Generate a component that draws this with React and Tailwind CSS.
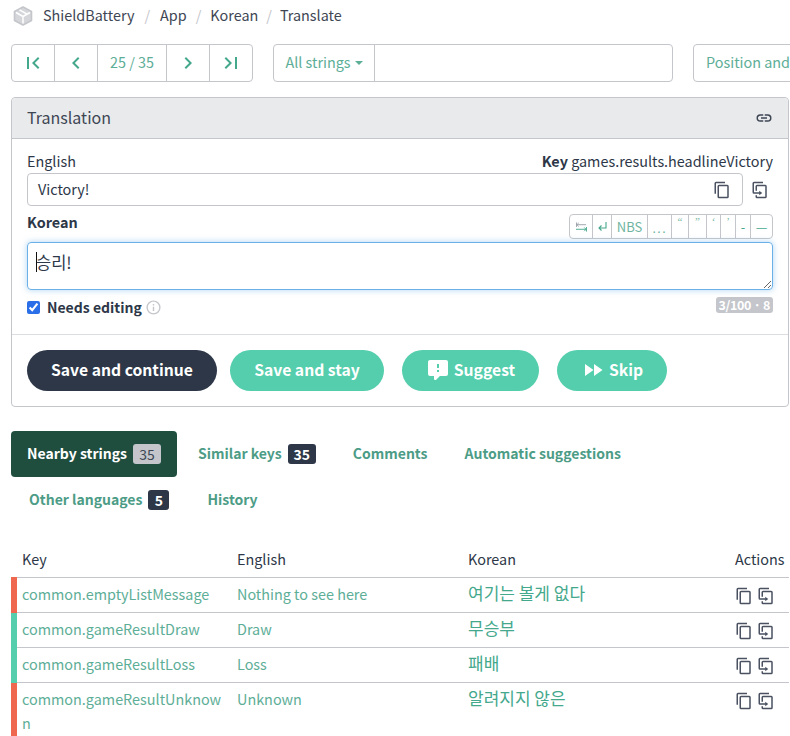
const FONT = "font-['Noto_Sans_CJK_KR','Noto_Sans',sans-serif]";

const ICONS = {
  first: "M18.41,16.59L13.82,12L18.41,7.41L17,6L11,12L17,18L18.41,16.59M6,6H8V18H6V6Z",
  prev: "M15.41,16.58L10.83,12L15.41,7.41L14,6L8,12L14,18L15.41,16.58Z",
  next: "M8.59,16.58L13.17,12L8.59,7.41L10,6L16,12L10,18L8.59,16.58Z",
  last: "M5.59,7.41L10.18,12L5.59,16.59L7,18L13,12L7,6L5.59,7.41M16,6H18V18H16V6Z",
  link: "M3.9,12C3.9,10.29 5.29,8.9 7,8.9H11V7H7A5,5 0 0,0 2,12A5,5 0 0,0 7,17H11V15.1H7C5.29,15.1 3.9,13.71 3.9,12M8,13H16V11H8V13M17,7H13V8.9H17C18.71,8.9 20.1,10.29 20.1,12C20.1,13.71 18.71,15.1 17,15.1H13V17H17A5,5 0 0,0 22,12A5,5 0 0,0 17,7Z",
  copy: "M19,21H8V7H19M19,5H8A2,2 0 0,0 6,7V21A2,2 0 0,0 8,23H19A2,2 0 0,0 21,21V7A2,2 0 0,0 19,5M16,1H4A2,2 0 0,0 2,3V17H4V3H16V1Z",
  duplicate: "M11,17H4A2,2 0 0,1 2,15V3A2,2 0 0,1 4,1H16V3H4V15H11V13L15,16L11,19V17M19,21V7H8V13H6V7A2,2 0 0,1 8,5H19A2,2 0 0,1 21,7V21A2,2 0 0,1 19,23H8A2,2 0 0,1 6,21V19H8V21H19Z",
  suggest: "M9,22A1,1 0 0,1 8,21V18H4A2,2 0 0,1 2,16V4C2,2.89 2.9,2 4,2H20A2,2 0 0,1 22,4V16A2,2 0 0,1 20,18H13.9L10.2,21.71C10,21.9 9.75,22 9.5,22V22H9M13,10V6H11V10H13M13,14V12H11V14H13Z",
  skip: "M13,6V18L21.5,12M4,18L12.5,12L4,6V18Z",
  info: "M11,9H13V7H11M12,20C7.59,20 4,16.41 4,12C4,7.59 7.59,4 12,4C16.41,4 20,7.59 20,12C20,16.41 16.41,20 12,20M12,2A10,10 0 0,0 2,12A10,10 0 0,0 12,22A10,10 0 0,0 22,12A10,10 0 0,0 12,2M11,17H13V11H11V17Z",
};

function Icon({ name, className }) {
  return (
    <svg viewBox="0 0 24 24" fill="currentColor" className={className}>
      <path d={ICONS[name]} />
    </svg>
  );
}

const ROWS = [
  { key: "common.emptyListMessage", en: "Nothing to see here", ko: "여기는 볼게 없다", bar: "border-l-[#f0674f]" },
  { key: "common.gameResultDraw", en: "Draw", ko: "무승부", bar: "border-l-[#54ceac]" },
  { key: "common.gameResultLoss", en: "Loss", ko: "패배", bar: "border-l-[#54ceac]" },
  { key: "common.gameResultUnknown", en: "Unknown", ko: "알려지지 않은", bar: "border-l-[#f0674f]" },
];

const CHARS = [
  { c: "NBS", w: "w-[36px] text-[13px]" },
  { c: "...", w: "w-[24px] text-[14px] tracking-[1px] font-['Liberation_Sans'] pt-[3px]" },
  { c: "“", w: "w-[17px] text-[11px] pb-[10px] font-['Liberation_Serif']" },
  { c: "”", w: "w-[18px] text-[11px] pb-[10px] font-['Liberation_Serif']" },
  { c: "‘", w: "w-[14px] text-[11px] pb-[10px] font-['Liberation_Serif']" },
  { c: "’", w: "w-[15px] text-[11px] pb-[10px] font-['Liberation_Serif']" },
  { c: "-", w: "w-[15px] text-[13px] text-[#44a88c]" },
];

export default function App() {
  return (
    <div className={`${FONT} relative h-[736px] w-[790px] overflow-hidden bg-white text-[14.4px] text-[#2d3748]`}>
      {/* Breadcrumb */}
      <div className="flex h-[32px] items-center pl-[13px] leading-[20px] text-[#3e4654]">
        <svg viewBox="0 0 20 20" className="mr-[10px] h-[20px] w-[20px]" fill="#d5d6da" stroke="#c4c6cb" strokeWidth="1.6" strokeLinejoin="round">
          <path d="M10 1 18.5 5.5v9L10 19 1.5 14.5v-9Z" />
          <path d="M3 6.5 10 10.5V17.5M10 10.5 17 6.5M6.5 3.8l7.5 4.4" fill="none" stroke="#fff" strokeWidth="1.5" />
        </svg>
        <span className="mb-[2px]">ShieldBattery</span>
        <span className="mx-[10px] mb-[2px] text-[#c4c6cb]">/</span>
        <span className="mb-[2px]">App</span>
        <span className="mx-[9px] mb-[2px] text-[#c4c6cb]">/</span>
        <span className="mb-[2px]">Korean</span>
        <span className="mx-[8px] mb-[2px] text-[#c4c6cb]">/</span>
        <span className="mb-[2px]">Translate</span>
      </div>

      {/* Toolbar */}
      <div className="mt-[12px] flex items-start pl-[11px]">
        <div className="flex h-[38px] w-[242px] shrink-0 items-stretch rounded-[4px] border border-[#c4c6cb] text-[#44a88c]">
          <div className="flex w-[43px] items-center justify-center border-r border-[#c4c6cb]"><Icon name="first" className="h-[24px] w-[24px]" /></div>
          <div className="flex w-[43px] items-center justify-center border-r border-[#c4c6cb]"><Icon name="prev" className="h-[24px] w-[24px]" /></div>
          <div className="flex w-[69px] items-center justify-center border-r border-[#c4c6cb] pb-[2px] text-[#5dae97]">25 / 35</div>
          <div className="flex w-[43px] items-center justify-center border-r border-[#c4c6cb]"><Icon name="next" className="h-[24px] w-[24px]" /></div>
          <div className="flex flex-1 items-center justify-center"><Icon name="last" className="h-[24px] w-[24px]" /></div>
        </div>
        <div className="ml-[20px] flex h-[38px] w-[400px] shrink-0 items-stretch rounded-[4px] border border-[#c4c6cb]">
          <div className="flex w-[101px] items-center justify-center gap-[4px] border-r border-[#c4c6cb] pb-[2px] text-[#5dae97]">
            All strings
            <span className="mt-[2px] h-0 w-0 border-x-[4px] border-t-[4px] border-x-transparent border-t-[#5dae97]" />
          </div>
        </div>
        <div className="ml-[20px] flex h-[38px] w-[200px] shrink-0 items-center whitespace-nowrap rounded-[4px] border border-[#c4c6cb] pb-[2px] pl-[12px] text-[#5dae97]">
          Position and context
        </div>
      </div>

      {/* Translation panel */}
      <div className="ml-[11px] mt-[15px] h-[310px] w-[778px] rounded-[4px] border border-[#c4c6cb]">
        <div className="flex h-[41px] items-center justify-between rounded-t-[4px] border-b border-[#c4c6cb] bg-[#e9eaec] px-[15px] text-[#3e4654]">
          <span className="mb-[2px] text-[16px]">Translation</span>
          <Icon name="link" className="h-[18px] w-[18px] text-[#3e4654]" />
        </div>

        <div className="h-[196px] border-b border-[#dcdde0] px-[15px]">
          <div className="flex h-[34px] items-end justify-between pb-[2px] leading-[20px]">
            <span>English</span>
            <span><b className="font-bold">Key</b> games.results.headlineVictory</span>
          </div>
          <div className="flex items-center">
            <div className="flex h-[33px] w-[716px] items-center justify-between rounded-[4px] border border-[#c4c6cb] pl-[10px] pr-[11px]">
              <span className="mb-[2px]">Victory!</span>
              <Icon name="copy" className="h-[18px] w-[18px] text-[#4a5160]" />
            </div>
            <Icon name="duplicate" className="ml-[8px] h-[18px] w-[18px] text-[#4a5160]" />
          </div>

          <div className="mt-[8px] flex h-[25px] items-start justify-between">
            <span className="font-bold leading-[16px]">Korean</span>
            <div className="flex h-[25px] w-[204px] items-stretch rounded-[4px] border border-[#c4c6cb] text-[#6fb5a0]">
              <div className="flex w-[23px] items-center justify-center border-r border-[#c4c6cb]">
                <svg viewBox="0 0 12 10" className="h-[10px] w-[11px]" fill="none" stroke="#44a88c" strokeWidth="1">
                  <path d="M0 2.5h11M3 .5 1 2.5l2 2M.5 0v5" stroke="#9aa0a8" />
                  <path d="M0 7.5h11M9 5.5l2 2-2 2M11.5 5v5" />
                </svg>
              </div>
              <div className="flex w-[19px] items-center justify-center border-r border-[#c4c6cb]">
                <svg viewBox="0 0 11 11" className="h-[11px] w-[11px]" fill="none" stroke="#44a88c" strokeWidth="1.1">
                  <path d="M9 1v6H2M4.5 4.5 2 7l2.5 2.5" />
                </svg>
              </div>
              {CHARS.map((item) => (
                <div key={item.c} className={`${item.w} flex items-center justify-center border-r border-[#c4c6cb]`}>
                  {item.c}
                </div>
              ))}
              <div className="flex flex-1 items-center justify-center text-[13px] text-[#44a88c]">—</div>
            </div>
          </div>

          <div className="relative mt-[3px] h-[48px] w-[746px]">
            <textarea
              readOnly
              defaultValue="승리!"
              className="block h-[48px] w-[746px] resize-y rounded-[4px] border border-[#6cb0e8] pl-[8px] pt-[7px] text-[16.5px] leading-[24px] shadow-[0_0_6px_rgba(108,176,232,0.55)] outline-none"
            />
            <span className="absolute left-[9px] top-[10px] h-[20px] w-px bg-[#111]" />
          </div>

          <div className="mt-[7px] flex items-start justify-between">
            <div className="flex h-[20px] items-center text-[14px] font-semibold">
              <input type="checkbox" checked readOnly className="mr-[7px] h-[13px] w-[13px] accent-[#2b6fe8]" />
              Needs editing
              <Icon name="info" className="ml-[3px] mt-[1px] h-[17px] w-[17px] text-[#c4c6cb]" />
            </div>
            <span className="rounded-[3px] bg-[#c4c6cb] px-[3px] text-[12.5px] font-bold leading-[16px] tracking-[-0.03em] text-white">3/100 · 8</span>
          </div>
        </div>

        <div className="flex items-center px-[15px] pt-[15px] text-[15.7px] font-semibold text-white">
          <div className="flex h-[41px] w-[190px] items-center justify-center rounded-full bg-[#2d3748] pb-[1px]">Save and continue</div>
          <div className="ml-[13px] flex h-[41px] w-[154px] items-center justify-center rounded-full bg-[#54ceac] pb-[1px]">Save and stay</div>
          <div className="ml-[18px] flex h-[41px] w-[137px] items-center justify-center gap-[4px] rounded-full bg-[#54ceac] pb-[1px]">
            <Icon name="suggest" className="h-[24px] w-[24px]" />
            Suggest
          </div>
          <div className="ml-[18px] flex h-[41px] w-[110px] items-center justify-center gap-[4px] rounded-full bg-[#54ceac] pb-[1px]">
            <Icon name="skip" className="h-[24px] w-[24px]" />
            Skip
          </div>
        </div>
      </div>

      {/* Tabs */}
      <div className="ml-[11px] mt-[24px] text-[14px] font-semibold text-[#4c9c86]">
        <div className="flex h-[46px] items-center">
          <div className="flex h-[46px] w-[166px] items-center rounded-[4px] bg-[#1f4e3f] pl-[16px] text-white">
            <span className="mb-[1px]">Nearby strings</span>
            <span className="ml-[6px] flex h-[20px] w-[28px] items-center justify-center rounded-[3px] bg-[#c4c6cb] font-normal text-[#3e4654]">35</span>
          </div>
          <div className="ml-[21px] flex items-center">
            <span className="mb-[1px]">Similar keys</span>
            <span className="ml-[6px] flex h-[20px] w-[28px] items-center justify-center rounded-[3px] bg-[#2d3748] text-white">35</span>
          </div>
          <span className="mb-[1px] ml-[37px]">Comments</span>
          <span className="mb-[1px] ml-[37px]">Automatic suggestions</span>
        </div>
        <div className="flex h-[46px] items-center pl-[18px]">
          <span className="mb-[1px]">Other languages</span>
          <span className="ml-[6px] flex h-[20px] w-[21px] items-center justify-center rounded-[3px] bg-[#2d3748] text-white">5</span>
          <span className="mb-[1px] ml-[38px]">History</span>
        </div>
      </div>

      {/* Nearby strings table */}
      <table className="ml-[11px] mt-[17px] w-[778px] table-fixed border-collapse">
        <thead>
          <tr className="h-[37px] border-b border-[#c4c6cb] text-left">
            <th className="w-[212px] pl-[8px] pt-[2px] font-normal">Key</th>
            <th className="w-[231px] pl-[11px] pt-[2px] font-normal">English</th>
            <th className="w-[278px] pl-[11px] pt-[2px] font-normal">Korean</th>
            <th className="pt-[2px] font-normal">Actions</th>
          </tr>
        </thead>
        <tbody className="text-[#5dae97]">
          {ROWS.map((r) => (
            <tr key={r.key} className="border-b border-[#c4c6cb] align-top">
              <td className={`${r.bar} border-l-[6px] pb-[6px] pl-[5px] pr-[2px] pt-[4px] leading-[24px] [word-break:break-all]`}>{r.key}</td>
              <td className="pb-[6px] pl-[11px] pt-[4px] leading-[24px]">{r.en}</td>
              <td className="pb-[6px] pl-[11px] pt-[4px] text-[17px] leading-[22px] text-[#44a88c]">{r.ko}</td>
              <td className="pb-[6px] pt-[4px]">
                <div className="mt-[5px] flex h-[18px] items-center gap-[4px] text-[#4a5160]">
                  <Icon name="copy" className="h-[18px] w-[18px]" />
                  <Icon name="duplicate" className="h-[18px] w-[18px]" />
                </div>
              </td>
            </tr>
          ))}
        </tbody>
      </table>
    </div>
  );
}
